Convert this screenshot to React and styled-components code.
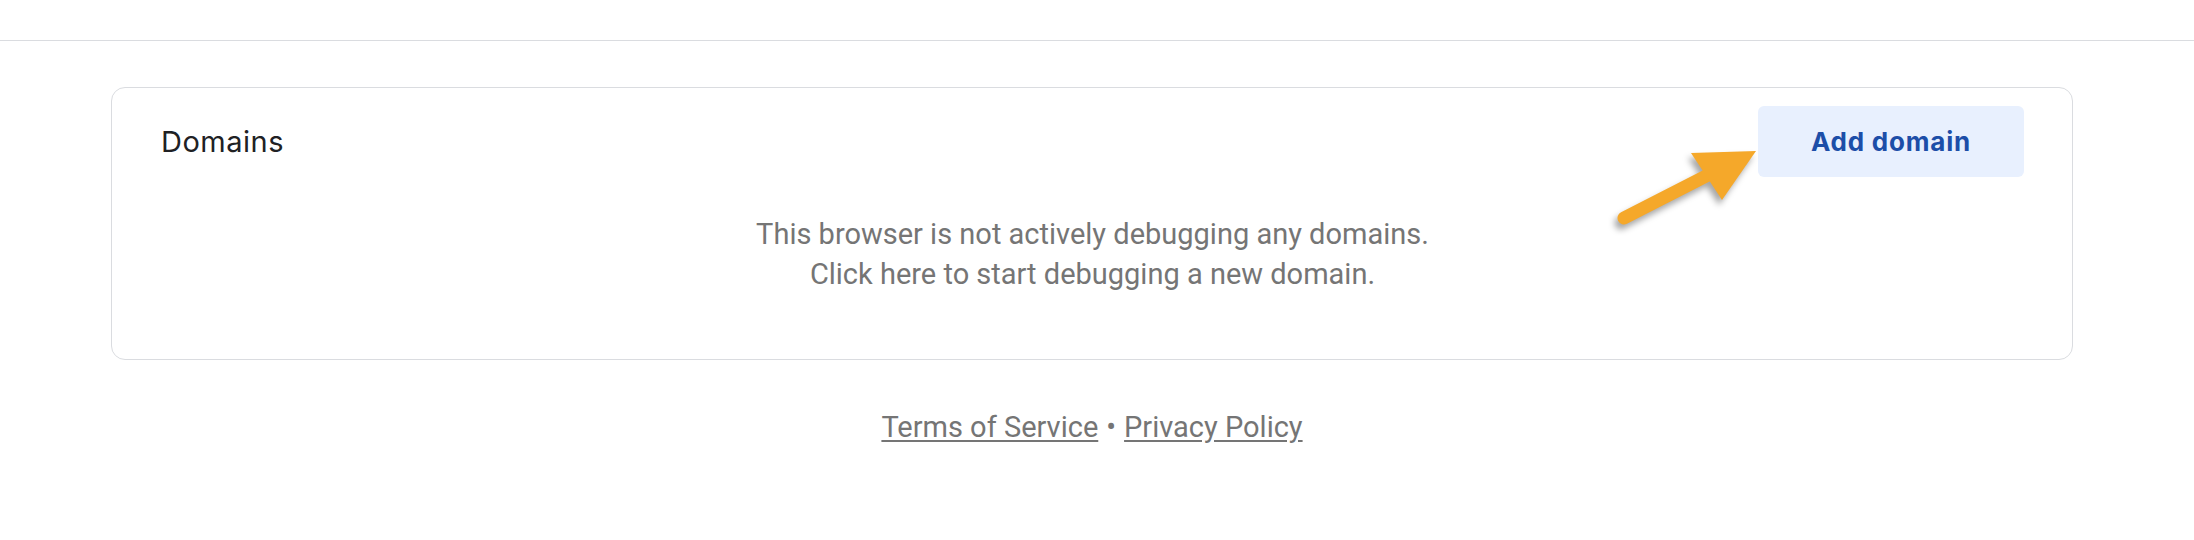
import React from "react";
import styled, { createGlobalStyle } from "styled-components";

const GlobalStyle = createGlobalStyle`
  html, body {
    margin: 0;
    padding: 0;
    background: #fff;
  }
  body {
    font-family: Roboto, "Liberation Sans", sans-serif;
  }
`;

const Page = styled.div`
  width: 2194px;
  min-height: 540px;
`;

const TopBar = styled.div`
  height: 40px;
  border-bottom: 1px solid #dadce0;
`;

const Main = styled.main`
  padding: 46px 121px 0 111px;
`;

const Card = styled.section`
  position: relative;
  border: 1px solid #dadce0;
  border-radius: 14px;
  height: 273px;
  box-sizing: border-box;
  padding: 18px 48px 0 49px;
`;

const CardHeader = styled.div`
  display: flex;
  align-items: center;
  justify-content: space-between;
`;

const Title = styled.h2`
  margin: 0;
  font-family: Inter, "Open Sans", sans-serif;
  font-weight: 400;
  font-size: 29px;
  letter-spacing: 0.5px;
  color: #202124;
`;

const AddButton = styled.button`
  width: 266px;
  height: 71px;
  border: none;
  border-radius: 6px;
  background: #e8f0fe;
  color: #1c4ea8;
  font-family: Inter, "Open Sans", sans-serif;
  font-weight: 700;
  font-size: 26px;
  letter-spacing: 0.8px;
  cursor: pointer;
`;

const Empty = styled.p`
  margin: 37px 0 0;
  text-align: center;
  font-size: 29px;
  line-height: 40px;
  color: #757575;
`;

const Footer = styled.footer`
  margin-top: 47px;
  text-align: center;
  font-size: 29px;
  line-height: 40px;
  color: #757575;
`;

const FooterLink = styled.a`
  color: #757575;
  text-decoration: underline;
  text-underline-offset: 3px;
`;

const Dot = styled.span`
  margin: 0 8px;
`;

const ArrowWrap = styled.svg`
  position: absolute;
  left: 1488px;
  top: 43px;
  overflow: visible;
  filter: drop-shadow(-3px 5px 3px rgba(0, 0, 0, 0.35));
`;

function Arrow() {
  return (
    <ArrowWrap width="170" height="105" viewBox="0 0 170 105">
      <line
        x1="24"
        y1="87"
        x2="112"
        y2="42"
        stroke="#f5a82a"
        strokeWidth="13"
        strokeLinecap="round"
      />
      <polygon points="156,20 91,22 122,69" fill="#f5a82a" />
    </ArrowWrap>
  );
}

export default function App() {
  return (
    <Page>
      <GlobalStyle />
      <TopBar />
      <Main>
        <Card>
          <CardHeader>
            <Title>Domains</Title>
            <AddButton>Add domain</AddButton>
          </CardHeader>
          <Empty>
            This browser is not actively debugging any domains.
            <br />
            Click here to start debugging a new domain.
          </Empty>
          <Arrow />
        </Card>
        <Footer>
          <FooterLink href="#">Terms of Service</FooterLink>
          <Dot>•</Dot>
          <FooterLink href="#">Privacy Policy</FooterLink>
        </Footer>
      </Main>
    </Page>
  );
}
